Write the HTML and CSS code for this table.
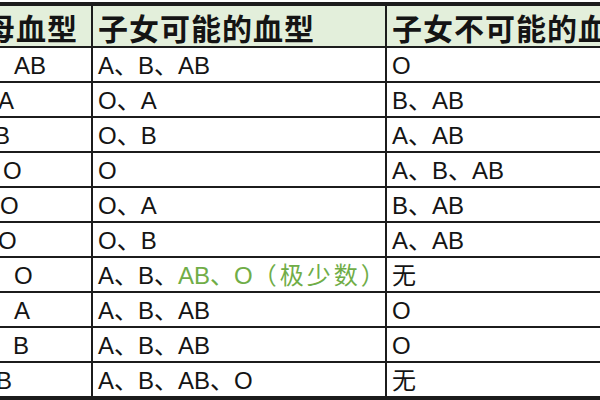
FILE: index.html
```html
<!DOCTYPE html>
<html lang="zh-CN">
<head>
<meta charset="utf-8">
<title>父母血型与子女血型</title>
<link rel="stylesheet" href="styles.css">
</head>
<body>
<div class="frame">
<table class="blood">
<colgroup><col class="c1"><col class="c2"><col class="c3"></colgroup>
<thead>
<tr><th>父母血型</th><th>子女可能的血型</th><th>子女不可能的血型</th></tr>
</thead>
<tbody>
<tr><td class="par i1">AB</td><td>A、B、AB</td><td>O</td></tr>
<tr><td class="par i2">A</td><td>O、A</td><td>B、AB</td></tr>
<tr><td class="par i3">B</td><td>O、B</td><td>A、AB</td></tr>
<tr><td class="par i4">O</td><td>O</td><td>A、B、AB</td></tr>
<tr><td class="par i5">O</td><td>O、A</td><td>B、AB</td></tr>
<tr><td class="par i6">O</td><td>O、B</td><td>A、AB</td></tr>
<tr><td class="par i7">O</td><td>A、B、<span class="rare">AB、O<span class="note">（极少数）</span></span></td><td>无</td></tr>
<tr><td class="par i8">A</td><td>A、B、AB</td><td>O</td></tr>
<tr><td class="par i9">B</td><td>A、B、AB</td><td>O</td></tr>
<tr><td class="par i10">B</td><td>A、B、AB、O</td><td>无</td></tr>
</tbody>
</table>
</div>
</body>
</html>
```
FILE: styles.css
```css
html, body {
  margin: 0;
  padding: 0;
}
body {
  width: 600px;
  height: 400px;
  overflow: hidden;
  background: #ffffff;
}
.frame {
  margin-left: -50px;
  padding-top: 2px;
}
.blood {
  border-collapse: collapse;
  table-layout: fixed;
  width: 735px;
  font-family: "Liberation Sans", "Noto Sans CJK SC", sans-serif;
  font-size: 24px;
  color: #141414;
}
.c1 { width: 141px; }
.c2 { width: 294px; }
.c3 { width: 300px; }
.blood th {
  height: 39px;
  padding: 1px 0 0 5px;
  background: #e3efdb;
  font-family: "Noto Sans CJK SC", sans-serif;
  font-weight: 700;
  font-size: 30px;
  letter-spacing: 1px;
  text-align: left;
  white-space: nowrap;
  border: 2px solid #1c1c1c;
  border-top: 4px solid #1c1c1c;
  vertical-align: middle;
  line-height: 1;
}
.blood th:first-child { padding-left: 2px; }
.blood td {
  height: 30px;
  padding: 3px 0 0 5px;
  text-align: left;
  white-space: nowrap;
  border: 2px solid #1c1c1c;
  vertical-align: middle;
  line-height: 1;
}
.blood tbody tr:last-child td {
  border-bottom: 4px solid #1c1c1c;
}
.blood td.par { padding-left: 0; }
.i1 { text-indent: 62px; }
.i2 { text-indent: 46px; }
.i3 { text-indent: 42px; }
.i4 { text-indent: 51px; }
.i5 { text-indent: 48px; }
.i6 { text-indent: 46px; }
.i7 { text-indent: 62px; }
.i8 { text-indent: 62px; }
.i9 { text-indent: 61px; }
.i10 { text-indent: 44px; }
.rare { color: #70ad47; }
.note { letter-spacing: 3px; }
```
